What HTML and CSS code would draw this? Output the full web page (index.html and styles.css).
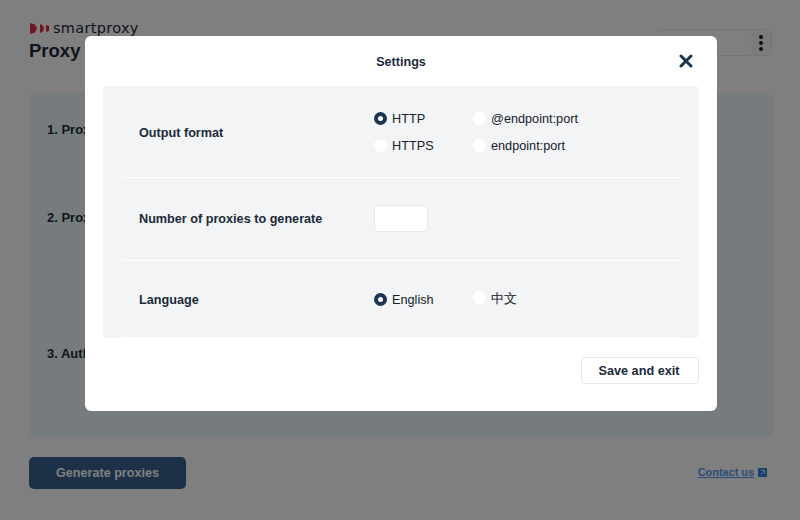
FILE: index.html
```html
<!DOCTYPE html>
<html lang="en">
<head>
  <meta charset="UTF-8">
  <meta name="viewport" content="width=device-width, initial-scale=1.0">
  <title>Settings</title>
  <link rel="stylesheet" href="styles.css">
</head>
<body>
  <div class="page">
    <header class="page-header">
      <div>
        <div class="logo">
          <svg class="logo-mark" width="19" height="11" viewBox="0 0 19 11">
            <path d="M0 0 L5 1.5 L7 5.5 L5 9.5 L0 11 Z" fill="#e02a45"/>
            <path d="M10 1 L13 2.5 L14 5.5 L13 8.5 L10 10 Z" fill="#e02a45"/>
            <path d="M16 2 L19 3 L19 8 L16 9 Z" fill="#e02a45"/>
          </svg>
          <span class="logo-text">smartproxy</span>
        </div>
        <h1 class="page-title">Proxy generator</h1>
      </div>
      <div class="user-box">
        <span class="user-dots"><i></i><i></i><i></i></span>
      </div>
    </header>

    <section class="steps">
      <div class="step step-1">1. Proxy type</div>
      <div class="step step-2">2. Proxy list</div>
      <div class="step step-3">3. Authentication</div>
    </section>

    <footer class="page-footer">
      <button class="generate-btn">Generate proxies</button>
      <a class="contact-link" href="#">Contact us</a>
      <svg class="contact-icon" width="9" height="9" viewBox="0 0 9 9">
        <rect width="9" height="9" rx="1" fill="#2d7fd8"/>
        <path d="M3 2.2 H6.8 V6 M6.6 2.4 L2.6 6.6" fill="none" stroke="#cfe0f0" stroke-width="1"/>
      </svg>
    </footer>
  </div>

  <div class="overlay"></div>

  <div class="modal">
    <div class="modal-head">
      <h2 class="modal-title">Settings</h2>
      <svg class="modal-close" width="14" height="14" viewBox="0 0 14 14">
        <path d="M2 2 L12 12 M12 2 L2 12" stroke="#1c3550" stroke-width="3" stroke-linecap="round"/>
      </svg>
    </div>

    <div class="settings">
      <div class="setting-row row-format">
        <div class="setting-label">Output format</div>
        <div class="radio-grid">
          <label class="radio checked"><span class="radio-dot"></span>HTTP</label>
          <label class="radio"><span class="radio-dot"></span>@endpoint:port</label>
          <label class="radio"><span class="radio-dot"></span>HTTPS</label>
          <label class="radio"><span class="radio-dot"></span>endpoint:port</label>
        </div>
      </div>
      <div class="setting-row row-count">
        <div class="setting-label">Number of proxies to generate</div>
        <input class="count-input" type="text">
      </div>
      <div class="setting-row row-lang">
        <div class="setting-label">Language</div>
        <div class="radio-grid">
          <label class="radio checked"><span class="radio-dot"></span>English</label>
          <label class="radio radio-raised"><span class="radio-dot"></span>中文</label>
        </div>
      </div>
    </div>

    <div class="modal-foot">
      <button class="save-btn">Save and exit</button>
    </div>
  </div>
</body>
</html>
```

FILE: styles.css
```css
* {
  box-sizing: border-box;
}

body {
  margin: 0;
  height: 520px;
  overflow: hidden;
  font-family: "Liberation Sans", Arial, sans-serif;
  color: #1c2b3a;
  background-color: #fff;
}

.page {
  height: 520px;
  padding: 21px 27px 0 29px;
}

.page-header {
  display: flex;
  justify-content: space-between;
  align-items: flex-start;
  height: 72px;
}

.logo {
  display: flex;
  align-items: center;
  gap: 4px;
  height: 15px;
  margin-top: -1px;
}

.logo-mark {
  margin: 2px 0 0 1px;
}

.logo-text {
  font-family: "DejaVu Sans", sans-serif;
  font-size: 14.5px;
  letter-spacing: 0.3px;
  color: #1c2b3a;
}

.page-title {
  margin: 3px 0 0;
  font-size: 18.5px;
  line-height: 26px;
  font-weight: bold;
}

.user-box {
  display: flex;
  justify-content: flex-end;
  width: 117px;
  height: 27px;
  margin: 8px 1px 0 0;
  border: 1px solid #e8eaed;
  border-radius: 6px;
}

.user-dots {
  display: flex;
  flex-direction: column;
  align-items: center;
  justify-content: center;
  gap: 2px;
  width: 20px;
  background-color: #f6f7f8;
  border-radius: 0 6px 6px 0;
}

.user-dots i {
  width: 4px;
  height: 4px;
  border-radius: 50%;
  background-color: #111c28;
}

.steps {
  height: 344px;
  padding: 28px 18px;
  background-color: #ecf6fa;
  border-radius: 6px;
  font-size: 13px;
  font-weight: bold;
}

.step {
  line-height: 18px;
}

.step-2 {
  margin-top: 70px;
}

.step-3 {
  margin-top: 118px;
}

.page-footer {
  display: flex;
  align-items: center;
  height: 32px;
  margin-top: 20px;
}

.generate-btn {
  width: 157px;
  height: 32px;
  border: none;
  border-radius: 5px;
  font-family: inherit;
  font-size: 12.6px;
  font-weight: bold;
  color: #fff;
  background-color: #38628e;
}

.contact-link {
  margin: 0 4px 2px auto;
  font-size: 10.9px;
  font-weight: bold;
  color: #4f9bf0;
}

.contact-icon {
  margin: 0 6px 2px 0;
}

/* затемнение под окном */
.overlay {
  position: absolute;
  top: 0;
  left: 0;
  width: 800px;
  height: 520px;
  background-color: rgba(0, 0, 0, 0.5);
}

.modal {
  position: absolute;
  top: 36px;
  left: 85px;
  width: 632px;
  height: 375px;
  padding: 0 18px;
  background-color: #fff;
  border-radius: 6px;
}

.modal-head {
  position: relative;
  height: 50px;
  padding-top: 18px;
  text-align: center;
}

.modal-title {
  margin: 0;
  font-size: 12.6px;
  line-height: 17px;
  font-weight: bold;
  color: #1c2b3a;
}

.modal-close {
  position: absolute;
  top: 18px;
  right: 6px;
}

.settings {
  height: 252px;
  padding: 0 18px;
  background-color: #f3f4f6;
  border-radius: 4px;
}

.setting-row {
  display: flex;
  align-items: center;
  padding-left: 18px;
  border-bottom: 1px solid #fff;
}

.row-format {
  height: 92px;
}

.row-count {
  height: 83px;
  padding-bottom: 2px;
}

.row-lang {
  height: 77px;
}

.setting-label {
  width: 235px;
  margin-top: 2px;
  font-size: 12.65px;
  font-weight: bold;
  color: #1c2b3a;
}

.radio-grid {
  display: grid;
  grid-template-columns: 99px auto;
  row-gap: 9px;
}

.radio {
  display: flex;
  align-items: center;
  gap: 5px;
  height: 18px;
  padding-top: 1px;
  font-size: 12.7px;
  color: #16202b;
}

.radio-dot {
  width: 13px;
  height: 13px;
  margin-top: -1px;
  border-radius: 50%;
  background-color: #fff;
}

.radio.checked .radio-dot {
  border: 4px solid #1c3550;
}

.radio-raised .radio-dot {
  margin-bottom: 3px;
}

.count-input {
  width: 54px;
  height: 27px;
  padding: 0;
  border: 1px solid #e6e8eb;
  border-radius: 4px;
  background-color: #fff;
}

.modal-foot {
  display: flex;
  justify-content: flex-end;
  padding-top: 19px;
}

.save-btn {
  width: 118px;
  height: 27px;
  padding: 0 8px 0 6px;
  border: 1px solid #e3e7eb;
  border-radius: 4px;
  font-family: inherit;
  font-size: 12.7px;
  font-weight: bold;
  color: #1c2b3a;
  background-color: #fff;
}
```
